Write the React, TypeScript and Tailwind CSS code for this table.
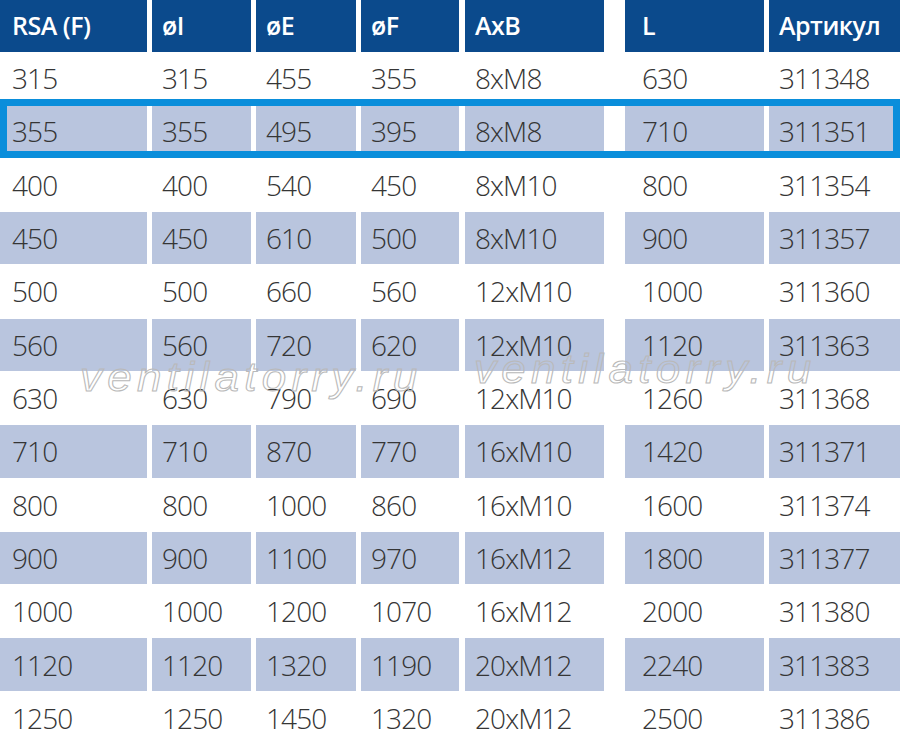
const headers = ["RSA (F)", "øI", "øE", "øF", "AxB", "L", "Артикул"];

const rows: string[][] = [
  ["315", "315", "455", "355", "8xM8", "630", "311348"],
  ["355", "355", "495", "395", "8xM8", "710", "311351"],
  ["400", "400", "540", "450", "8xM10", "800", "311354"],
  ["450", "450", "610", "500", "8xM10", "900", "311357"],
  ["500", "500", "660", "560", "12xM10", "1000", "311360"],
  ["560", "560", "720", "620", "12xM10", "1120", "311363"],
  ["630", "630", "790", "690", "12xM10", "1260", "311368"],
  ["710", "710", "870", "770", "16xM10", "1420", "311371"],
  ["800", "800", "1000", "860", "16xM10", "1600", "311374"],
  ["900", "900", "1100", "970", "16xM12", "1800", "311377"],
  ["1000", "1000", "1200", "1070", "16xM12", "2000", "311380"],
  ["1120", "1120", "1320", "1190", "20xM12", "2240", "311383"],
  ["1250", "1250", "1450", "1320", "20xM12", "2500", "311386"],
];

// widths + gaps measured off the sheet, they add up to 900
const cols = [
  "w-[147px] pl-[12px]",
  "ml-[5px] w-[99px] pl-[10px]",
  "ml-[5px] w-[100px] pl-[10px]",
  "ml-[5px] w-[98px] pl-[10px]",
  "ml-[6px] w-[139px] pl-[10px]",
  "ml-[21px] w-[139px] pl-[17px]",
  "ml-[5px] w-[131px] pl-[10px]",
];

function Watermark({ className }: { className: string }) {
  return (
    <div
      className={`absolute origin-left scale-x-[1.1] text-[40px] leading-none italic tracking-[0.12em] text-transparent font-['Liberation_Sans',Arial,sans-serif] [-webkit-text-stroke:1px_#b9b9b9] pointer-events-none select-none whitespace-nowrap ${className}`}
    >
      ventilatorry.ru
    </div>
  );
}

export default function App() {
  return (
    <div className="relative w-[900px] h-[745px] bg-white overflow-hidden font-['Open_Sans',sans-serif]">
      <div className="flex h-[52px]">
        {headers.map((h, i) => (
          <div
            key={h}
            className={`${cols[i]} shrink-0 flex items-center bg-[#0b4a8c] text-white text-[25px] font-semibold tracking-[-0.5px]`}
          >
            {h}
          </div>
        ))}
      </div>

      <div className="flex flex-col h-[693px]">
        {rows.map((r, ri) => (
          <div key={ri} className="flex-1 flex">
            {r.map((v, ci) => (
              <div
                key={ci}
                className={`${cols[ci]} shrink-0 flex items-center h-[calc(100%-1px)] text-[28px] font-light tracking-[-0.9px] text-[#353535] ${
                  ri % 2 === 1 ? "bg-[#b9c5de]" : "bg-white"
                }`}
              >
                {v}
              </div>
            ))}
          </div>
        ))}
      </div>

      {/* highlighted row frame */}
      <div className="absolute left-0 top-[99px] w-[900px] h-[59px] border-[7px] border-[#0a8edb] pointer-events-none" />

      <Watermark className="left-[80px] top-[357px]" />
      <Watermark className="left-[474px] top-[349px]" />
    </div>
  );
}
